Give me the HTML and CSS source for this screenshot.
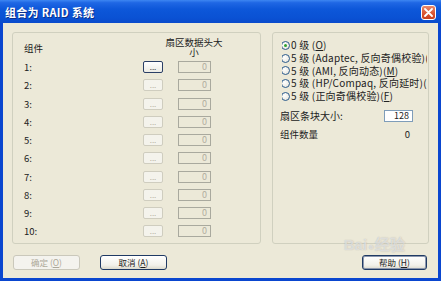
FILE: index.html
```html
<!DOCTYPE html>
<html lang="zh-CN">
<head>
    <meta charset="UTF-8">
    <title>组合为 RAID 系统</title>
    <link rel="stylesheet" href="styles.css">
</head>
<body>
    <div class="window">
        <div class="titlebar">
            <span class="title">组合为 RAID 系统</span>
            <span class="close">
                <svg width="9" height="9" viewBox="0 0 9 9"><path d="M1 1 L8 8 M8 1 L1 8" stroke="#fff" stroke-width="1.8" stroke-linecap="round"/></svg>
            </span>
        </div>

        <div class="client">
            <div class="groups">
                <div class="group disks">
                    <div class="disk-head">
                        <span class="head-label">组件</span>
                        <span class="head-size">扇区数据头大<br>小</span>
                    </div>
                    <div class="disk-row"><span class="disk-num">1:</span><span class="mini-btn active">...</span><span class="field">0</span></div>
                    <div class="disk-row"><span class="disk-num">2:</span><span class="mini-btn">...</span><span class="field">0</span></div>
                    <div class="disk-row"><span class="disk-num">3:</span><span class="mini-btn">...</span><span class="field">0</span></div>
                    <div class="disk-row"><span class="disk-num">4:</span><span class="mini-btn">...</span><span class="field">0</span></div>
                    <div class="disk-row"><span class="disk-num">5:</span><span class="mini-btn">...</span><span class="field">0</span></div>
                    <div class="disk-row"><span class="disk-num">6:</span><span class="mini-btn">...</span><span class="field">0</span></div>
                    <div class="disk-row"><span class="disk-num">7:</span><span class="mini-btn">...</span><span class="field">0</span></div>
                    <div class="disk-row"><span class="disk-num">8:</span><span class="mini-btn">...</span><span class="field">0</span></div>
                    <div class="disk-row"><span class="disk-num">9:</span><span class="mini-btn">...</span><span class="field">0</span></div>
                    <div class="disk-row"><span class="disk-num">10:</span><span class="mini-btn">...</span><span class="field">0</span></div>
                </div>

                <div class="group options">
                    <div class="radio-list">
                        <div class="radio-row"><span class="radio checked"></span><span class="radio-text">0 级 (<u>O</u>)</span></div>
                        <div class="radio-row"><span class="radio"></span><span class="radio-text">5 级 (Adaptec, 反向奇偶校验)(</span></div>
                        <div class="radio-row"><span class="radio"></span><span class="radio-text">5 级 (AMI, 反向动态)(<u>M</u>)</span></div>
                        <div class="radio-row"><span class="radio"></span><span class="radio-text">5 级 (HP/Compaq, 反向延时)(</span></div>
                        <div class="radio-row"><span class="radio"></span><span class="radio-text">5 级 (正向奇偶校验)(<u>F</u>)</span></div>
                    </div>
                    <div class="opt-row">
                        <span class="opt-label">扇区条块大小:</span>
                        <span class="field edit">128</span>
                    </div>
                    <div class="opt-row count">
                        <span class="opt-label">组件数量</span>
                        <span>0</span>
                    </div>
                </div>
            </div>

            <div class="buttons">
                <span class="btn disabled">确定 (<u>O</u>)</span>
                <span class="btn">取消 (<u>A</u>)</span>
                <span class="btn default">帮助 (<u>H</u>)</span>
            </div>
        </div>

        <div class="watermark">Bai<span class="wm-paw">●</span>经验</div>
    </div>
</body>
</html>
```

FILE: styles.css
```css
body {
    margin: 0;
    font-family: "Noto Sans CJK SC", sans-serif;
    font-size: 9.5px;
    color: #222;
    background: #fff;
}
.window {
    position: relative;
    width: 441px;
    height: 281px;
    background: #0a46cf;
    display: flex;
    flex-direction: column;
    overflow: hidden;
}
.titlebar {
    height: 23px;
    flex: none;
    display: flex;
    align-items: center;
    justify-content: space-between;
    padding: 0 5px;
    background: linear-gradient(to bottom, #3d86f2 0%, #1f67e4 12%, #0d57d9 40%, #0a52d4 75%, #0a4bcc 100%);
}
.title {
    color: #fff;
    font-size: 11px;
    font-weight: bold;
    letter-spacing: 0.3px;
    padding-top: 1px;
    text-shadow: 1px 1px 0 #0a2f8a;
}
.close {
    width: 15px;
    height: 15px;
    box-sizing: border-box;
    border: 1px solid #fff;
    border-radius: 3px;
    background: linear-gradient(to bottom, #e98a6c, #d9532f 60%, #c9411f);
    display: flex;
    align-items: center;
    justify-content: center;
    margin-top: 1px;
}
.client {
    flex: 1;
    margin: 0 3px 3px 3px;
    background: #ece9d8;
    padding: 9px 9px 8px 9px;
    display: flex;
    flex-direction: column;
}
.groups {
    display: flex;
    gap: 11px;
    height: 212px;
}
.group {
    box-sizing: border-box;
    height: 212px;
    border: 1px solid #d0d0bf;
    border-radius: 3px;
}

/* left group */
.disks {
    width: 249px;
    padding: 4px 49px 0 11px;
}
.disk-head {
    display: flex;
    justify-content: space-between;
    height: 24px;
}
.head-label {
    padding-top: 5px;
    line-height: 12px;
}
.head-size {
    width: 62px;
    margin-right: -14px;
    text-align: center;
    line-height: 10px;
}
.disk-row {
    display: grid;
    grid-template-columns: 1fr 20px 33px;
    column-gap: 15px;
    height: 18.25px;
    align-items: start;
}
.disk-num {
    line-height: 12px;
}
.mini-btn {
    box-sizing: border-box;
    height: 12px;
    border: 1px solid #cfcdbf;
    border-radius: 2px;
    background: #f4f3ec;
    color: #b4b1a2;
    font-size: 8px;
    line-height: 9px;
    text-align: center;
}
.mini-btn.active {
    border-color: #2b3f66;
    background: linear-gradient(to bottom, #fff, #ecebe4);
    color: #333;
}
.field {
    box-sizing: border-box;
    height: 12px;
    border: 1px solid #a9a99e;
    background: #ece9d8;
    color: #b1ae9f;
    text-align: right;
    padding-right: 3px;
    line-height: 10px;
    font-size: 9px;
}

/* right group */
.options {
    width: 157px;
    padding: 6px 15px 0 9px;
}
.radio-list {
    margin-right: -14px;
}
.radio-row {
    display: flex;
    align-items: center;
    gap: 1px;
    height: 12.75px;
    white-space: nowrap;
    overflow-x: clip;
}
.radio {
    flex: none;
    width: 9px;
    height: 9px;
    box-sizing: border-box;
    margin-left: -1px;
    border: 1px solid #2a5a8c;
    border-radius: 50%;
    background: radial-gradient(circle at 35% 35%, #fff, #e4e2d8);
    display: flex;
    align-items: center;
    justify-content: center;
}
.radio.checked::after {
    content: "";
    width: 3px;
    height: 3px;
    border-radius: 50%;
    background: #2fa02f;
}
.radio-text {
    font-size: 10px;
    line-height: 12.75px;
    letter-spacing: 0.2px;
}
.opt-row {
    display: flex;
    justify-content: space-between;
    align-items: center;
    height: 12px;
    margin-top: 7px;
    font-size: 10px;
}
.opt-label {
    margin-left: -2px;
}
.field.edit {
    width: 29px;
    background: #fff;
    border-color: #7f9db9;
    color: #222;
}
.opt-row.count {
    margin-top: 6px;
    padding-right: 3px;
    font-size: 9.5px;
}

/* bottom buttons */
.buttons {
    display: flex;
    margin-top: 11px;
    padding: 0 2px 0 1px;
    gap: 20px;
}
.btn {
    box-sizing: border-box;
    width: 67px;
    height: 15px;
    border: 1px solid #1f3a64;
    border-radius: 3px;
    background: linear-gradient(to bottom, #fff, #f2f1ea 70%, #dcdacd);
    text-align: center;
    line-height: 13px;
    font-size: 8.5px;
}
.btn.disabled {
    border-color: #cac8bb;
    background: #f4f3ee;
    color: #aca899;
}
.btn.default {
    width: 65px;
    margin-left: auto;
    box-shadow: inset 0 0 0 1px #8c97ad;
}

/* watermark over the dialog */
.watermark {
    position: absolute;
    left: 344px;
    top: 237px;
    font-family: "Liberation Sans", sans-serif;
    font-size: 15px;
    font-weight: bold;
    line-height: 16px;
    color: rgba(255, 255, 255, 0.55);
    text-shadow: 0 0 1px rgba(120, 120, 120, 0.5);
    pointer-events: none;
}
.wm-paw {
    font-size: 10px;
    margin: 0 1px;
}
```
